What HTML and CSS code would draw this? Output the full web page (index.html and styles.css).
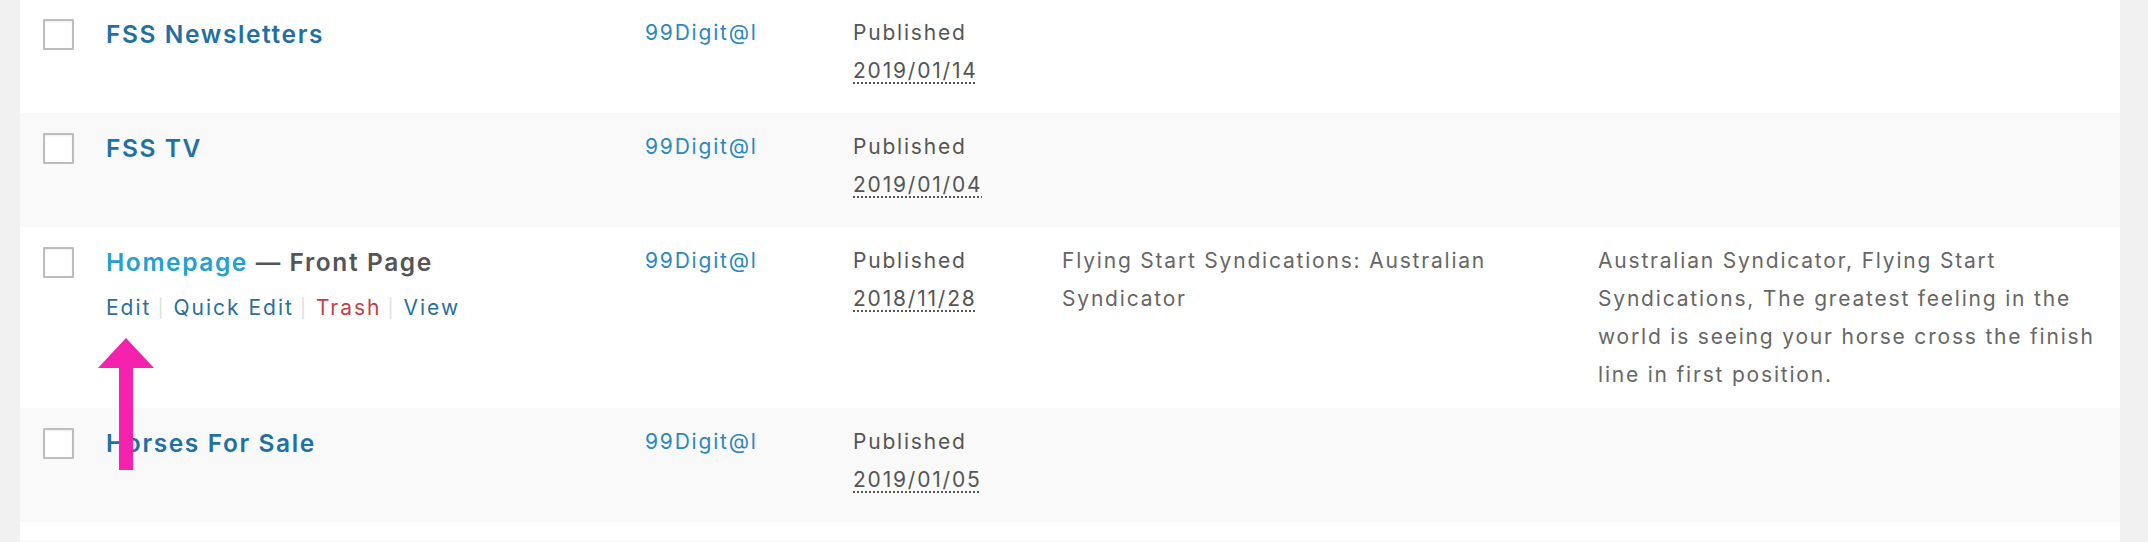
FILE: index.html
```html
<!DOCTYPE html>
<html lang="en">
<head>
<meta charset="utf-8">
<title>Pages</title>
<link rel="stylesheet" href="styles.css">
</head>
<body>
<div class="page">
  <div class="list">
    <div class="row">
      <div class="cell cb"><span class="checkbox"></span></div>
      <div class="cell title">
        <a class="row-title">FSS Newsletters</a>
        <div class="row-actions hidden"><a>Edit</a><span class="sep">|</span><a>Quick Edit</a><span class="sep">|</span><a class="trash">Trash</a><span class="sep">|</span><a>View</a></div>
      </div>
      <div class="cell author"><a>99Digit@l</a></div>
      <div class="cell date">Published<br><abbr>2019/01/14</abbr></div>
      <div class="cell seo"></div>
      <div class="cell desc"></div>
    </div>
    <div class="row alt">
      <div class="cell cb"><span class="checkbox"></span></div>
      <div class="cell title">
        <a class="row-title">FSS TV</a>
        <div class="row-actions hidden"><a>Edit</a><span class="sep">|</span><a>Quick Edit</a><span class="sep">|</span><a class="trash">Trash</a><span class="sep">|</span><a>View</a></div>
      </div>
      <div class="cell author"><a>99Digit@l</a></div>
      <div class="cell date">Published<br><abbr>2019/01/04</abbr></div>
      <div class="cell seo"></div>
      <div class="cell desc"></div>
    </div>
    <div class="row">
      <div class="cell cb"><span class="checkbox"></span></div>
      <div class="cell title">
        <a class="row-title hover">Homepage</a><span class="post-state"> — Front Page</span>
        <div class="row-actions"><a>Edit</a><span class="sep">|</span><a>Quick Edit</a><span class="sep">|</span><a class="trash">Trash</a><span class="sep">|</span><a>View</a></div>
      </div>
      <div class="cell author"><a>99Digit@l</a></div>
      <div class="cell date">Published<br><abbr>2018/11/28</abbr></div>
      <div class="cell seo">Flying Start Syndications: Australian Syndicator</div>
      <div class="cell desc">Australian Syndicator, Flying Start Syndications, The greatest feeling in the world is seeing your horse cross the finish line in first position.</div>
    </div>
    <div class="row alt">
      <div class="cell cb"><span class="checkbox"></span></div>
      <div class="cell title">
        <a class="row-title">Horses For Sale</a>
        <div class="row-actions hidden"><a>Edit</a><span class="sep">|</span><a>Quick Edit</a><span class="sep">|</span><a class="trash">Trash</a><span class="sep">|</span><a>View</a></div>
      </div>
      <div class="cell author"><a>99Digit@l</a></div>
      <div class="cell date">Published<br><abbr>2019/01/05</abbr></div>
      <div class="cell seo"></div>
      <div class="cell desc"></div>
    </div>
    <div class="row filler"></div>
  </div>
  <svg class="arrow" width="60" height="136" viewBox="0 0 60 136" aria-hidden="true">
    <polygon points="30,2 2,32 58,32" fill="#f422ad"/>
    <rect x="23" y="31" width="14" height="103" fill="#f422ad"/>
  </svg>
</div>
</body>
</html>
```
FILE: styles.css
```css
html, body {
  margin: 0;
  padding: 0;
  background: #f1f1f1;
  overflow: hidden;
}

.page {
  position: relative;
  width: 2148px;
  height: 542px;
  padding: 0 28px 0 20px;
  box-sizing: border-box;
  font-family: Inter, "Liberation Sans", sans-serif;
  font-size: 21px;
  letter-spacing: 1.8px;
  color: #555;
}

.list {
  background: #fff;
  margin-top: -1px;
  height: 560px;
}

.row {
  display: grid;
  grid-template-columns: 86px 539px 208px 209px 536px 522px;
  background: #fff;
}

.row.alt {
  background: #f9f9f9;
}

.cell {
  padding: 15px 0 14px;
  line-height: 38px;
}

.cell.title {
  padding-bottom: 13px;
  line-height: 41px;
}

.cb {
  padding-left: 23px;
}

.checkbox {
  display: block;
  width: 31px;
  height: 31px;
  margin-top: 5px;
  box-sizing: border-box;
  border: 2px solid #bdbdbd;
  border-radius: 1px;
  background: #fff;
  box-shadow: inset 0 1px 2px rgba(0, 0, 0, 0.08);
}

.row-title {
  font-size: 24.5px;
  font-weight: 600;
  line-height: 41px;
  letter-spacing: 1.6px;
  color: #1f70a4;
}

.row-title.hover {
  color: #23a0d0;
}

.post-state {
  font-size: 24.5px;
  font-weight: 600;
  line-height: 41px;
  letter-spacing: 1.6px;
  color: #555;
}

.row-actions {
  padding-top: 5px;
  line-height: 38px;
  letter-spacing: 2px;
  color: #ddd;
}

.row-actions.hidden {
  visibility: hidden;
}

.row-actions a {
  color: #2a6f9c;
}

.row-actions a.trash {
  color: #c2404a;
}

.row-actions .sep {
  margin: 0 8px 0 6px;
  color: #dedede;
  font-size: 18px;
}

.author a {
  color: #2a88bd;
}

.date abbr {
  text-decoration: underline dotted #555;
  text-underline-offset: 4px;
  text-decoration-thickness: 2px;
}

.seo,
.desc {
  color: #666;
  padding-right: 10px;
}

.filler {
  height: 40px;
}

.arrow {
  position: absolute;
  left: 96px;
  top: 337px;
}
```
